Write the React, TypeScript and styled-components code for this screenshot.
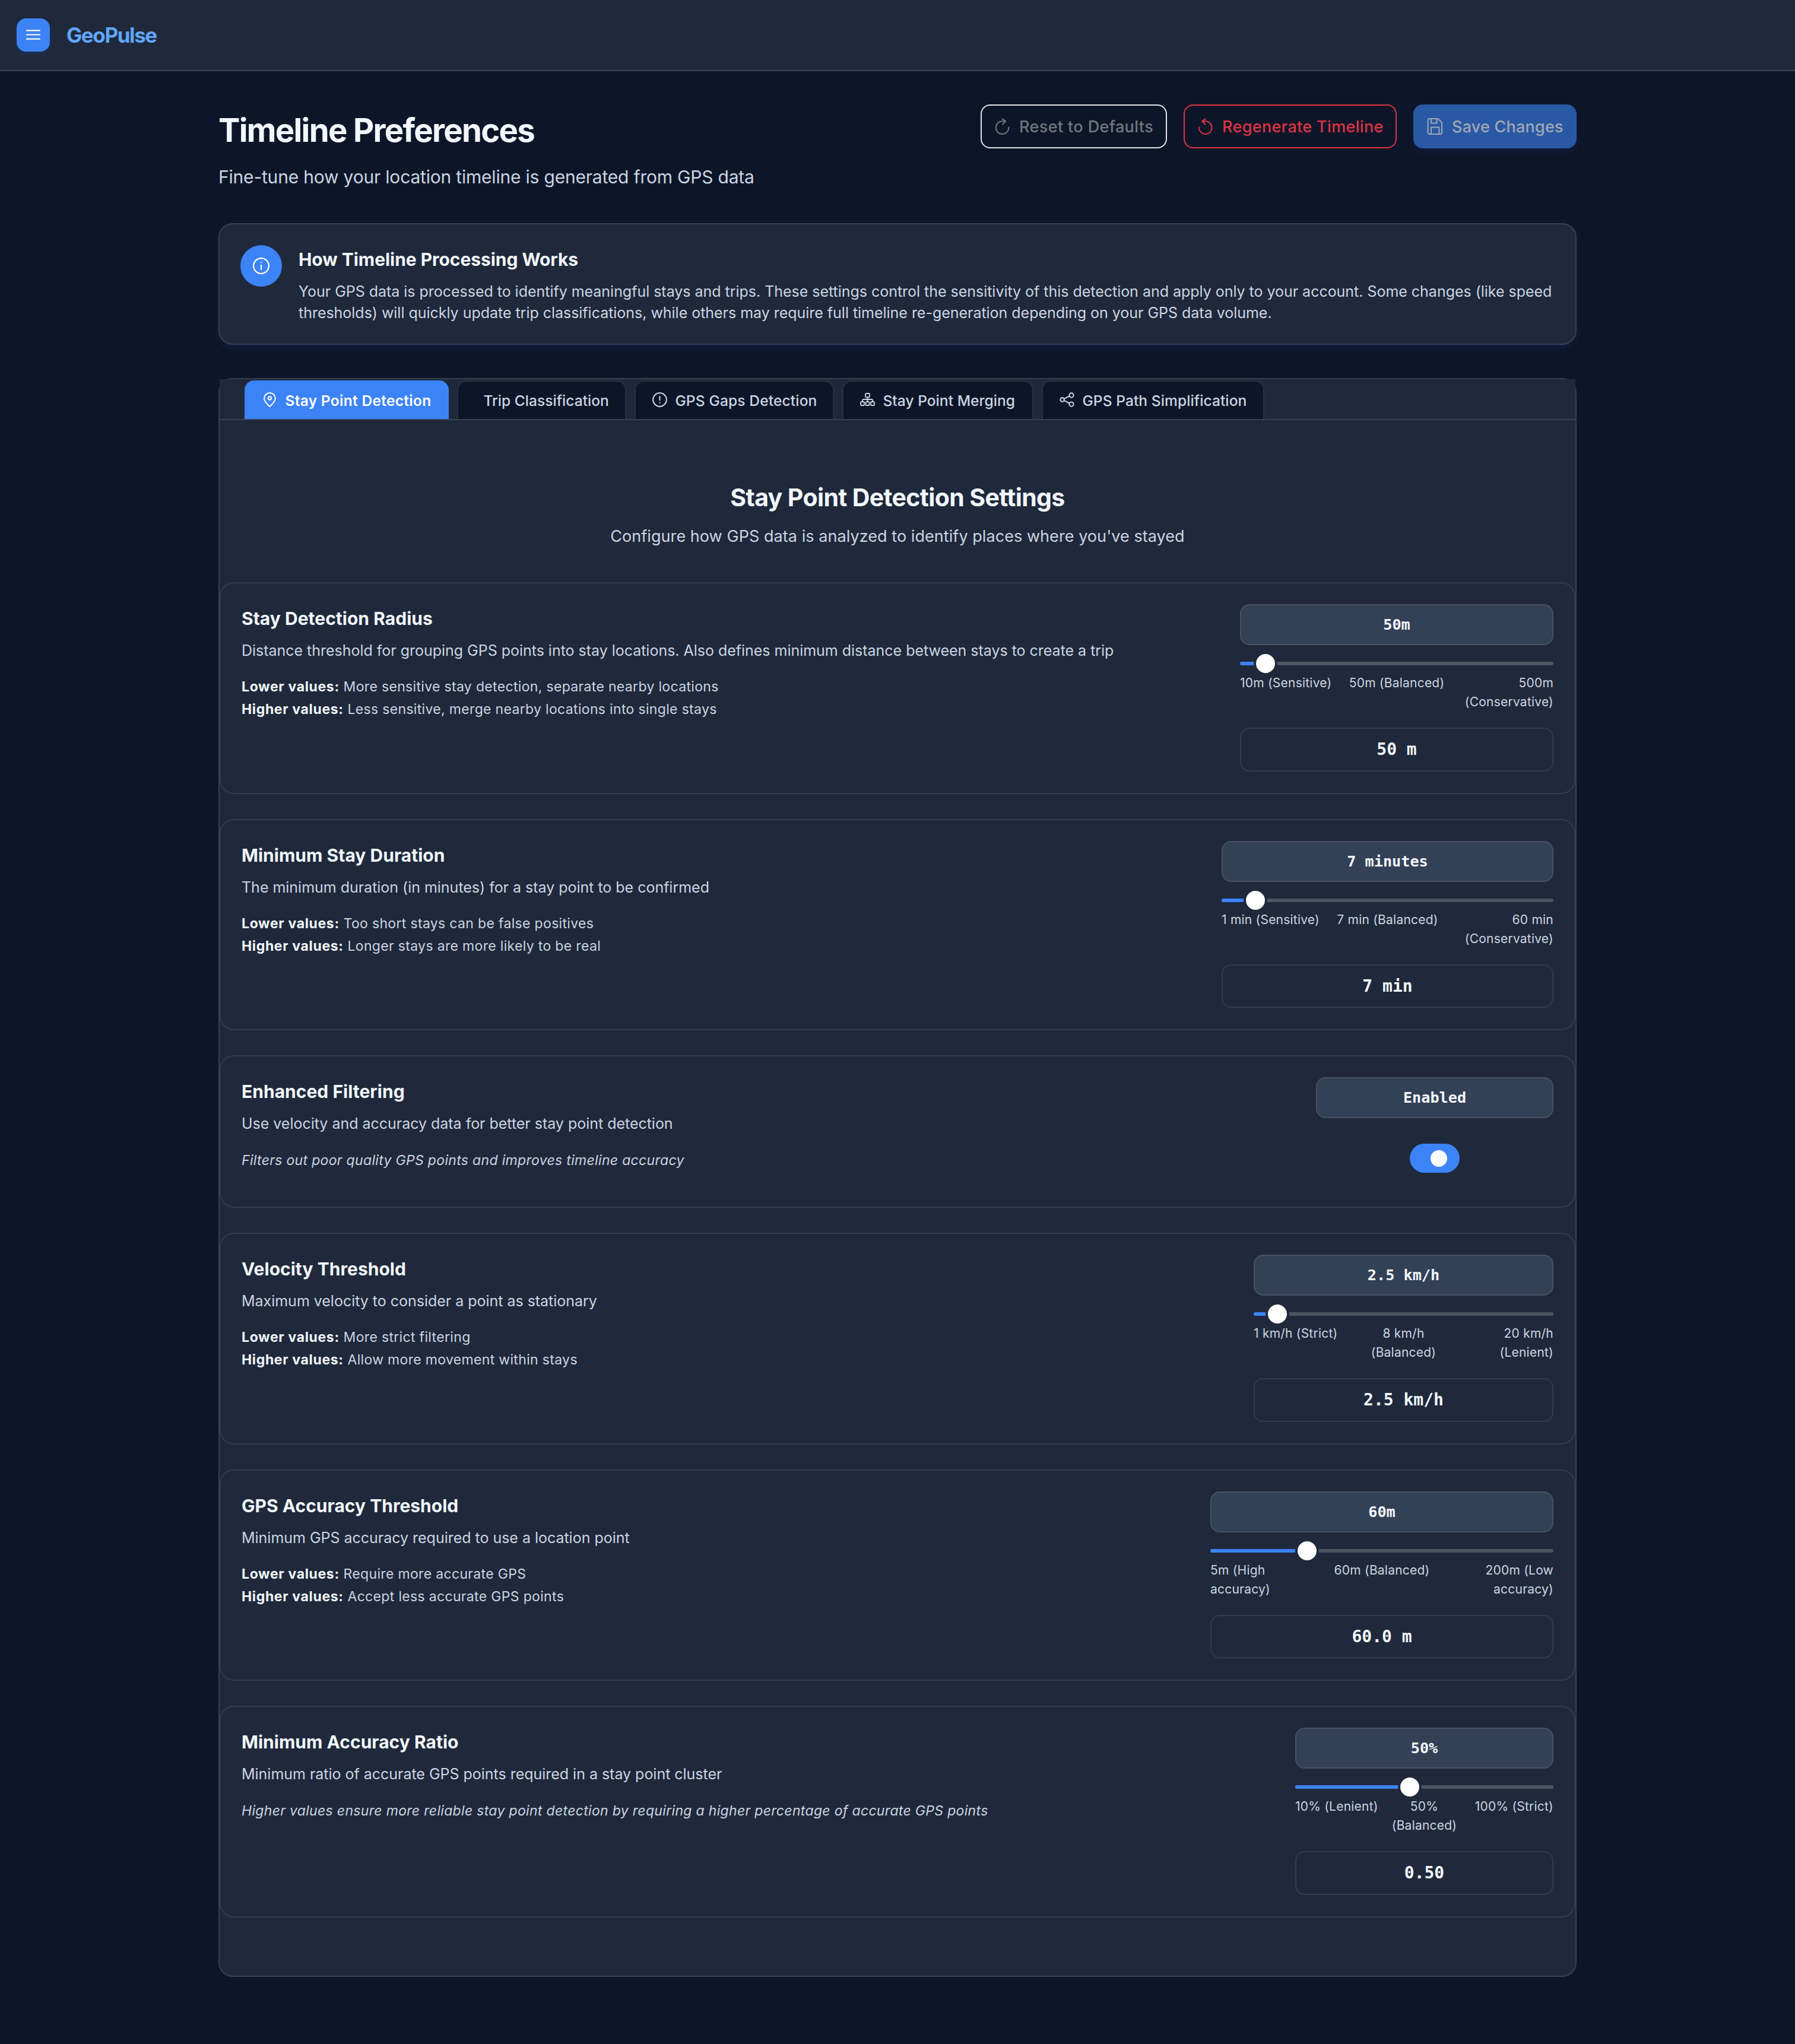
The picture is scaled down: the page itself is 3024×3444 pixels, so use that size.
import React from "react";
import styled, { createGlobalStyle, css } from "styled-components";

const color = {
  page: "#0d1628",
  surface: "#1f293b",
  border: "#354050",
  cardBorder: "#313d4d",
  raised: "#334157",
  raisedBorder: "#465263",
  track: "#4b5563",
  primary: "#3c83f7",
  text: "#f3f6fb",
  muted: "#cbd5e1",
  danger: "#dc3545",
};

const GlobalStyle = createGlobalStyle`
  *, *::before, *::after { box-sizing: border-box; }
  body {
    margin: 0;
    background: ${color.page};
    color: ${color.text};
    font-family: Inter, "Liberation Sans", sans-serif;
  }
  h1, h2, h3, p { margin: 0; }
  button { font-family: inherit; margin: 0; }
`;

const Page = styled.div`
  min-height: 3444px;
  background: ${color.page};
`;

const Navbar = styled.header`
  display: flex;
  align-items: center;
  gap: 28px;
  height: 120px;
  padding: 0 28px;
  background: ${color.surface};
  border-bottom: 2px solid ${color.border};
`;

const MenuButton = styled.button`
  display: grid;
  place-items: center;
  width: 56px;
  height: 56px;
  padding: 0;
  border: 0;
  border-radius: 16px;
  background: ${color.primary};
  color: #fff;
  box-shadow: 0 4px 8px rgba(30, 64, 175, 0.25);
`;

const Brand = styled.span`
  font-size: 35px;
  font-weight: 700;
  line-height: 48px;
  letter-spacing: -1.4px;
  color: #60a5fa;
`;

const Main = styled.main`
  width: 2288px;
  margin: 0 auto;
  padding-top: 56px;
`;

const PageHeader = styled.div`
  display: flex;
  justify-content: space-between;
  align-items: flex-start;
`;

const PageTitle = styled.h1`
  font-size: 54.5px;
  font-weight: 700;
  line-height: 87px;
  letter-spacing: -1.7px;
`;

const PageSubtitle = styled.p`
  margin-top: 13px;
  font-size: 30px;
  line-height: 44px;
  letter-spacing: -0.2px;
  color: ${color.muted};
`;

const Actions = styled.div`
  display: flex;
  gap: 28px;
`;

type ActionKind = "reset" | "danger" | "save";

const actionStyles = {
  reset: css`
    width: 314px;
    border: 2px solid #e4e6ea;
    background: transparent;
    color: #72757d;
    letter-spacing: 0.38px;
  `,
  danger: css`
    width: 359px;
    border: 2px solid ${color.danger};
    background: transparent;
    color: ${color.danger};
    letter-spacing: 0.34px;
  `,
  save: css`
    width: 275px;
    border: 2px solid #2959a5;
    background: #2959a5;
    color: #a1a7b3;
    letter-spacing: 0.22px;
    box-shadow: 0 8px 12px rgba(30, 64, 175, 0.12);
  `,
};

const ActionButton = styled.button<{ $kind: ActionKind }>`
  display: flex;
  align-items: center;
  gap: 15px;
  height: 74px;
  padding: 0 20px;
  border-radius: 16px;
  font-size: 27px;
  font-weight: 500;
  white-space: nowrap;
  ${({ $kind }) => actionStyles[$kind]}
`;

const InfoCard = styled.section`
  display: flex;
  align-items: flex-start;
  gap: 28px;
  height: 205px;
  margin-top: 56px;
  padding: 35px;
  border: 2px solid ${color.border};
  border-radius: 24px;
  background: ${color.surface};
  box-shadow: 0 4px 12px rgba(30, 64, 175, 0.2);
`;

const InfoBadge = styled.div`
  display: grid;
  place-items: center;
  flex: none;
  width: 70px;
  height: 70px;
  border-radius: 50%;
  background: ${color.primary};
  color: #fff;
`;

const InfoTitle = styled.h3`
  font-size: 30px;
  font-weight: 650;
  line-height: 48px;
  letter-spacing: -0.05px;
`;

const InfoText = styled.p`
  margin-top: 12px;
  font-size: 25px;
  line-height: 36px;
  letter-spacing: -0.025px;
  color: ${color.muted};
  white-space: pre-line;
`;

const Panel = styled.section`
  margin-top: 56px;
  padding-bottom: 98px;
  border: 2px solid ${color.border};
  border-radius: 24px;
  background: ${color.surface};
`;

const TabBar = styled.nav`
  display: flex;
  align-items: flex-end;
  gap: 14px;
  height: 69px;
  padding-left: 42px;
  background: ${color.surface};
  border-bottom: 2px solid ${color.border};
`;

const Tab = styled.button<{ $width: number; $active?: boolean; $spacing: number }>`
  display: flex;
  align-items: center;
  gap: 13.4px;
  width: ${({ $width }) => $width}px;
  height: 65px;
  padding: 0 0 0 28px;
  border: 2px solid ${({ $active }) => ($active ? color.primary : "#263141")};
  border-bottom: 0;
  border-radius: 16px 16px 0 0;
  background: ${({ $active }) => ($active ? color.primary : color.page)};
  color: ${({ $active }) => ($active ? "#fff" : color.muted)};
  font-size: 24.5px;
  font-weight: ${({ $active }) => ($active ? 600 : 500)};
  letter-spacing: ${({ $spacing }) => $spacing}px;
  white-space: nowrap;
`;

const TabIcon = styled.span<{ $empty?: boolean }>`
  display: flex;
  width: ${({ $empty }) => ($empty ? 1 : 25)}px;
  margin-top: -2px;
`;

const TabLabel = styled.span`
  padding-top: 1.5px;
`;

const SectionHeader = styled.div`
  padding: 100px 0 56px;
  text-align: center;
`;

const SectionTitle = styled.h2`
  font-size: 41px;
  font-weight: 650;
  line-height: 60px;
  letter-spacing: -0.62px;
`;

const SectionText = styled.p`
  margin-top: 15px;
  font-size: 27px;
  line-height: 42px;
  letter-spacing: 0.06px;
  color: ${color.muted};
`;

const SettingList = styled.div`
  display: flex;
  flex-direction: column;
  gap: 42px;
`;

const SettingCard = styled.article<{ $short?: boolean }>`
  display: flex;
  justify-content: space-between;
  height: ${({ $short }) => ($short ? 257 : 356.5)}px;
  padding: 35px;
  border: 2px solid ${color.cardBorder};
  border-radius: 24px;
  background: ${color.surface};
`;

const SettingTitle = styled.h3`
  font-size: 30px;
  font-weight: 650;
  line-height: 48px;
  letter-spacing: 0.02px;
`;

const SettingText = styled.p`
  margin-top: 10px;
  font-size: 25px;
  line-height: 40px;
  letter-spacing: -0.02px;
  color: ${color.muted};
`;

const Hints = styled.div`
  margin-top: 22px;
  font-size: 23px;
  line-height: 38px;
  letter-spacing: 0.33px;
  color: ${color.muted};
`;

const HintNote = styled(Hints)`
  margin-top: 23px;
  font-style: italic;
  letter-spacing: 0.32px;
`;

const HintTerm = styled.strong`
  font-weight: 700;
  letter-spacing: 0.65px;
  color: ${color.text};
`;

const Control = styled.div<{ $width: number }>`
  display: flex;
  flex-direction: column;
  flex: none;
  width: ${({ $width }) => $width}px;
`;

const ValueBadge = styled.output`
  display: flex;
  align-items: center;
  justify-content: center;
  height: 69px;
  border: 2px solid ${color.raisedBorder};
  border-radius: 16px;
  background: ${color.raised};
  font-family: "DejaVu Sans Mono", monospace;
  font-size: 25.2px;
  font-weight: 700;
`;

const Track = styled.div`
  position: relative;
  height: 6px;
  margin-top: 28px;
  border-radius: 3px;
  background: ${color.track};
`;

const TrackFill = styled.div`
  height: 6px;
  border-radius: 3px;
  background: ${color.primary};
`;

const Handle = styled.span`
  position: absolute;
  top: 50%;
  width: 40px;
  height: 40px;
  transform: translate(-50%, -50%);
  border: 4px solid ${color.surface};
  border-radius: 50%;
  background: #fff;
`;

const Scale = styled.div`
  display: grid;
  grid-template-columns: repeat(3, 1fr);
  height: 64px;
  margin-top: 14px;
  font-size: 21px;
  line-height: 32px;
  letter-spacing: 0.22px;
  color: ${color.muted};
`;

const ScaleLabel = styled.span<{ $align: "left" | "center" | "right" }>`
  text-align: ${({ $align }) => $align};
  white-space: pre;
`;

const NumberField = styled.div`
  display: flex;
  align-items: center;
  justify-content: center;
  height: 73.5px;
  margin-top: 27px;
  border: 2px solid ${color.cardBorder};
  border-radius: 16px;
  font-family: "DejaVu Sans Mono", monospace;
  font-size: 28px;
  font-weight: 700;
  white-space: pre;
`;

const Toggle = styled.button`
  display: flex;
  align-items: center;
  align-self: center;
  width: 84px;
  height: 49px;
  margin-top: 43px;
  padding: 0 0 0 35px;
  border: 0;
  border-radius: 25px;
  background: ${color.primary};
`;

const ToggleKnob = styled.span`
  width: 28px;
  height: 28px;
  border-radius: 50%;
  background: #fafafa;
`;

type IconProps = { size: number; stroke?: number; children: React.ReactNode };

const Icon = ({ size, stroke = 2, children }: IconProps) => (
  <svg
    width={size}
    height={size}
    viewBox={`0 0 ${size} ${size}`}
    fill="none"
    stroke="currentColor"
    strokeWidth={stroke}
    strokeLinecap="round"
    strokeLinejoin="round"
  >
    {children}
  </svg>
);

const BarsIcon = () => (
  <Icon size={28} stroke={2.2}>
    <path d="M3 6.3H25M3 13.5H25M3 20.6H25" />
  </Icon>
);

const RefreshIcon = () => (
  <Icon size={28}>
    <path d="M15 1.4L20.2 5.3L15 10.5M20.2 5.3H14.6A10.8 10.8 0 1 0 25.4 15.6" />
  </Icon>
);

const UndoIcon = () => (
  <Icon size={28}>
    <path d="M14.4 1.4L9.2 5.3L14.4 10.5M9.2 5.3H14.8A10.8 10.8 0 1 1 4 15.6" />
  </Icon>
);

const SaveIcon = () => (
  <Icon size={28}>
    <path d="M5 1H19.6L26 7.4V24.6A2.4 2.4 0 0 1 23.6 27H5A2.4 2.4 0 0 1 2.6 24.6V3.4A2.4 2.4 0 0 1 5 1Z" />
    <path d="M8 1.4V8.4H17.6V1.4M8 26.6V15.4H21.4V26.6" />
  </Icon>
);

const InfoIcon = () => (
  <Icon size={30} stroke={2.2}>
    <circle cx="15" cy="15" r="12.9" />
    <path d="M15 13.6V21.2M15 9.2V9.3" />
  </Icon>
);

const PinIcon = () => (
  <Icon size={25}>
    <path d="M12.4 24C9.4 21 3 15.6 3 10.4A9.4 9.4 0 0 1 21.8 10.4C21.8 15.6 15.4 21 12.4 24Z" />
    <circle cx="12.4" cy="10" r="2.7" />
  </Icon>
);

const ExclamationIcon = () => (
  <Icon size={25}>
    <circle cx="12.5" cy="12.5" r="11.4" />
    <path d="M12.5 7V13.2M12.5 17.6V17.7" />
  </Icon>
);

const SitemapIcon = () => (
  <Icon size={25} stroke={1.8}>
    <rect x="9" y="2" width="7" height="6.4" rx="1.4" />
    <rect x="1" y="16" width="6" height="6" rx="1.6" />
    <rect x="9.5" y="16" width="6" height="6" rx="1.6" />
    <rect x="18" y="16" width="6" height="6" rx="1.6" />
    <path d="M12.5 8.4V16M4 16V13.6A1.6 1.6 0 0 1 5.6 12H19.4A1.6 1.6 0 0 1 21 13.6V16" />
  </Icon>
);

const ShareIcon = () => (
  <Icon size={25}>
    <circle cx="4.6" cy="12.4" r="3.3" />
    <circle cx="20" cy="4.9" r="3.6" />
    <circle cx="20" cy="20.1" r="3.6" />
    <path d="M7.6 10.9L16.8 6.5M7.6 13.9L16.8 18.5" />
  </Icon>
);

type SliderSpec = { percent: number; marks: [string, string, string]; field: string };

type Setting = {
  title: string;
  text: string;
  lower?: string;
  higher?: string;
  note?: string;
  width: number;
  value: string;
  slider?: SliderSpec;
};

const settings: Setting[] = [
  {
    title: "Stay Detection Radius",
    text: "Distance threshold for grouping GPS points into stay locations. Also defines minimum distance between stays to create a trip",
    lower: "More sensitive stay detection, separate nearby locations",
    higher: "Less sensitive, merge nearby locations into single stays",
    width: 528,
    value: "50m",
    slider: {
      percent: (40 / 490) * 100,
      marks: ["10m (Sensitive)", "50m (Balanced)", "500m\n(Conservative)"],
      field: "50 m",
    },
  },
  {
    title: "Minimum Stay Duration",
    text: "The minimum duration (in minutes) for a stay point to be confirmed",
    lower: "Too short stays can be false positives",
    higher: "Longer stays are more likely to be real",
    width: 559,
    value: "7 minutes",
    slider: {
      percent: (6 / 59) * 100,
      marks: ["1 min (Sensitive)", "7 min (Balanced)", "60 min\n(Conservative)"],
      field: "7 min",
    },
  },
  {
    title: "Enhanced Filtering",
    text: "Use velocity and accuracy data for better stay point detection",
    note: "Filters out poor quality GPS points and improves timeline accuracy",
    width: 400,
    value: "Enabled",
  },
  {
    title: "Velocity Threshold",
    text: "Maximum velocity to consider a point as stationary",
    lower: "More strict filtering",
    higher: "Allow more movement within stays",
    width: 505,
    value: "2.5 km/h",
    slider: {
      percent: (1.5 / 19) * 100,
      marks: ["1 km/h (Strict)", "8 km/h\n(Balanced)", "20 km/h\n(Lenient)"],
      field: "2.5 km/h",
    },
  },
  {
    title: "GPS Accuracy Threshold",
    text: "Minimum GPS accuracy required to use a location point",
    lower: "Require more accurate GPS",
    higher: "Accept less accurate GPS points",
    width: 578,
    value: "60m",
    slider: {
      percent: (55 / 195) * 100,
      marks: ["5m (High\naccuracy)", "60m (Balanced)", "200m (Low\naccuracy)"],
      field: "60.0 m",
    },
  },
  {
    title: "Minimum Accuracy Ratio",
    text: "Minimum ratio of accurate GPS points required in a stay point cluster",
    note: "Higher values ensure more reliable stay point detection by requiring a higher percentage of accurate GPS points",
    width: 435,
    value: "50%",
    slider: {
      percent: (40 / 90) * 100,
      marks: ["10% (Lenient)", "50%\n(Balanced)", "100% (Strict)"],
      field: "0.50",
    },
  },
];

const Slider = ({ percent, marks, field }: SliderSpec) => (
  <>
    <Track>
      <TrackFill style={{ width: `${percent}%` }} />
      <Handle style={{ left: `${percent}%` }} />
    </Track>
    <Scale>
      <ScaleLabel $align="left">{marks[0]}</ScaleLabel>
      <ScaleLabel $align="center">{marks[1]}</ScaleLabel>
      <ScaleLabel $align="right">{marks[2]}</ScaleLabel>
    </Scale>
    <NumberField>{field}</NumberField>
  </>
);

const SettingRow = ({ setting }: { setting: Setting }) => (
  <SettingCard $short={!setting.slider}>
    <div>
      <SettingTitle>{setting.title}</SettingTitle>
      <SettingText>{setting.text}</SettingText>
      {setting.note ? (
        <HintNote>{setting.note}</HintNote>
      ) : (
        <Hints>
          <div>
            <HintTerm>Lower values:</HintTerm> {setting.lower}
          </div>
          <div>
            <HintTerm>Higher values:</HintTerm> {setting.higher}
          </div>
        </Hints>
      )}
    </div>
    <Control $width={setting.width}>
      <ValueBadge>{setting.value}</ValueBadge>
      {setting.slider ? (
        <Slider {...setting.slider} />
      ) : (
        <Toggle role="switch" aria-checked="true">
          <ToggleKnob />
        </Toggle>
      )}
    </Control>
  </SettingCard>
);

const tabs = [
  { label: "Stay Point Detection", icon: <PinIcon />, width: 344, spacing: 0.3, active: true },
  { label: "Trip Classification", icon: null, width: 285, spacing: 0.04 },
  { label: "GPS Gaps Detection", icon: <ExclamationIcon />, width: 336, spacing: 0.16 },
  { label: "Stay Point Merging", icon: <SitemapIcon />, width: 322, spacing: 0.06 },
  { label: "GPS Path Simplification", icon: <ShareIcon />, width: 375, spacing: 0.1 },
];

export default function App() {
  return (
    <Page>
      <GlobalStyle />
      <Navbar>
        <MenuButton>
          <BarsIcon />
        </MenuButton>
        <Brand>GeoPulse</Brand>
      </Navbar>
      <Main>
        <PageHeader>
          <div>
            <PageTitle>Timeline Preferences</PageTitle>
            <PageSubtitle>Fine-tune how your location timeline is generated from GPS data</PageSubtitle>
          </div>
          <Actions>
            <ActionButton $kind="reset">
              <RefreshIcon />
              Reset to Defaults
            </ActionButton>
            <ActionButton $kind="danger">
              <UndoIcon />
              Regenerate Timeline
            </ActionButton>
            <ActionButton $kind="save">
              <SaveIcon />
              Save Changes
            </ActionButton>
          </Actions>
        </PageHeader>
        <InfoCard>
          <InfoBadge>
            <InfoIcon />
          </InfoBadge>
          <div>
            <InfoTitle>How Timeline Processing Works</InfoTitle>
            <InfoText>
              {
                "Your GPS data is processed to identify meaningful stays and trips. These settings control the sensitivity of this detection and apply only to your account. Some changes (like speed\nthresholds) will quickly update trip classifications, while others may require full timeline re-generation depending on your GPS data volume."
              }
            </InfoText>
          </div>
        </InfoCard>
        <Panel>
          <TabBar>
            {tabs.map((tab) => (
              <Tab key={tab.label} $width={tab.width} $spacing={tab.spacing} $active={tab.active}>
                <TabIcon $empty={!tab.icon}>{tab.icon}</TabIcon>
                <TabLabel>{tab.label}</TabLabel>
              </Tab>
            ))}
          </TabBar>
          <SectionHeader>
            <SectionTitle>Stay Point Detection Settings</SectionTitle>
            <SectionText>Configure how GPS data is analyzed to identify places where you've stayed</SectionText>
          </SectionHeader>
          <SettingList>
            {settings.map((setting) => (
              <SettingRow key={setting.title} setting={setting} />
            ))}
          </SettingList>
        </Panel>
      </Main>
    </Page>
  );
}
